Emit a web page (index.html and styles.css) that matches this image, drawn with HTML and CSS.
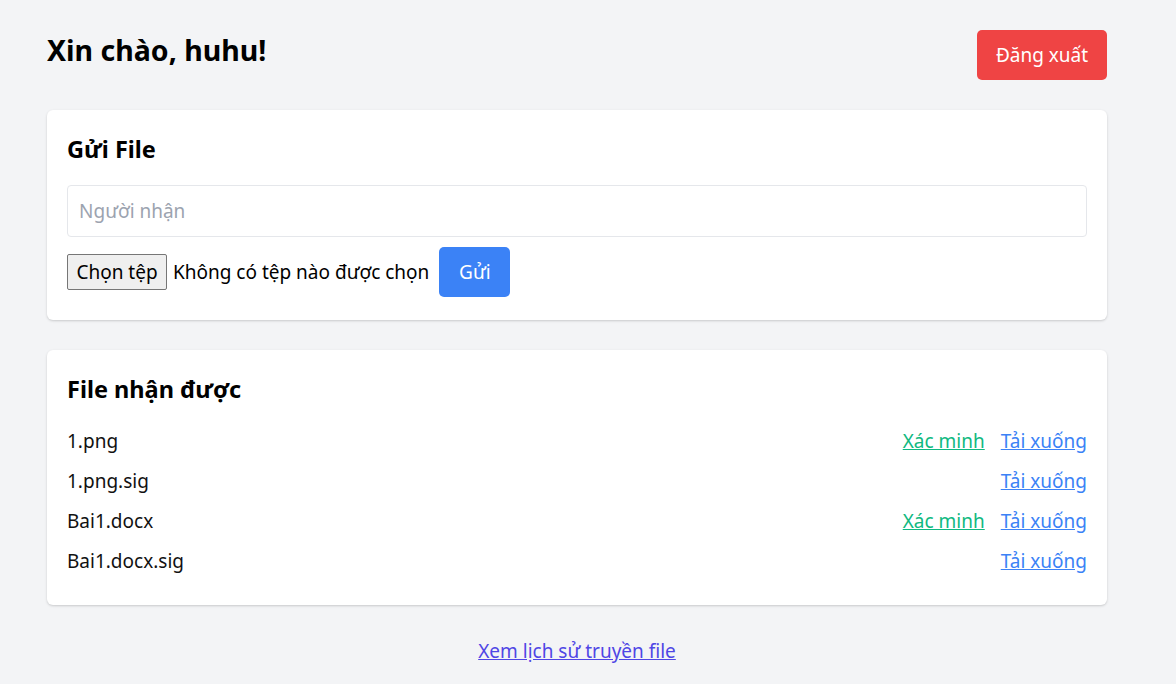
FILE: index.html
```html
<!DOCTYPE html>
<html lang="vi">
<head>
<meta charset="utf-8">
<title>Gửi File</title>
<link rel="stylesheet" href="styles.css">
</head>
<body>
<div class="page">
  <header class="header">
    <h1 class="greeting">Xin chào, huhu!</h1>
    <button class="btn btn-red" type="button">Đăng xuất</button>
  </header>

  <section class="card card-send">
    <h2 class="card-title">Gửi File</h2>
    <input class="text-input" type="text" placeholder="Người nhận">
    <div class="file-row">
      <span class="file-picker">
        <button class="file-btn" type="button">Chọn tệp</button>
        <span class="file-name">Không có tệp nào được chọn</span>
      </span>
      <button class="btn btn-blue" type="button">Gửi</button>
    </div>
  </section>

  <section class="card card-received">
    <h2 class="card-title">File nhận được</h2>
    <ul class="file-list">
      <li class="file-item"><span>1.png</span><span class="actions"><a href="#" class="link-green">Xác minh</a><a href="#" class="link-blue">Tải xuống</a></span></li>
      <li class="file-item"><span>1.png.sig</span><span class="actions"><a href="#" class="link-blue">Tải xuống</a></span></li>
      <li class="file-item"><span>Bai1.docx</span><span class="actions"><a href="#" class="link-green">Xác minh</a><a href="#" class="link-blue">Tải xuống</a></span></li>
      <li class="file-item"><span>Bai1.docx.sig</span><span class="actions"><a href="#" class="link-blue">Tải xuống</a></span></li>
    </ul>
  </section>

  <div class="history">
    <a href="#" class="link-indigo">Xem lịch sử truyền file</a>
  </div>
</div>
</body>
</html>
```

FILE: styles.css
```css
* { box-sizing: border-box; }
html, body {
  margin: 0;
  background: #f3f4f6;
}
body {
  font-family: "Noto Sans", "Open Sans", sans-serif;
  font-size: 19px;
  color: #111;
}
.page {
  width: 1060px;
  margin-left: 47px;
  padding-top: 30px;
}
.header {
  display: flex;
  justify-content: space-between;
  align-items: flex-start;
  margin-bottom: 30px;
}
.greeting {
  margin: 0;
  font-size: 28.5px;
  line-height: 40px;
  font-weight: 700;
  color: #000;
}
.btn {
  border: none;
  border-radius: 5px;
  color: #fff;
  font-family: inherit;
  font-size: 19px;
  height: 50px;
  padding: 0 20px;
  cursor: pointer;
}
.btn-red { background: #ef4444; width: 130px; padding: 0; }
.btn-blue { background: #3b82f6; width: 71px; padding: 0; }
.card {
  background: #fff;
  border-radius: 6px;
  box-shadow: 0 1px 3px rgba(0,0,0,0.12), 0 1px 2px rgba(0,0,0,0.06);
  padding: 20px 20px 23px;
}
.card-send { margin-bottom: 30px; }
.card-title {
  margin: 0 0 17px;
  font-size: 23.5px;
  line-height: 38px;
  font-weight: 700;
  color: #000;
}
.text-input {
  display: block;
  width: 100%;
  height: 52px;
  border: 1px solid #e5e7eb;
  border-radius: 4px;
  padding: 0 11px;
  font-family: inherit;
  font-size: 19px;
  color: #111;
  margin-bottom: 10px;
}
.text-input::placeholder { color: #9ca3af; }
.file-row {
  display: flex;
  align-items: center;
  gap: 10px;
}
.file-picker {
  display: flex;
  align-items: center;
  gap: 6px;
}
.file-btn {
  height: 36px;
  width: 100px;
  padding: 0;
  border: 1px solid #767676;
  border-radius: 2px;
  background: #efefef;
  font-family: inherit;
  font-size: 19px;
  color: #000;
}
.file-name { color: #000; }
.card-received { padding-bottom: 24px; }
.card-received .card-title { margin-bottom: 13px; }
.file-list {
  list-style: none;
  margin: 0;
  padding: 0;
}
.file-item {
  display: flex;
  justify-content: space-between;
  align-items: center;
  height: 40px;
}
.actions {
  display: flex;
  gap: 16px;
}
.link-green { color: #10b981; }
.link-blue { color: #3b82f6; }
.link-indigo { color: #4f46e5; }
.history {
  text-align: center;
  margin-top: 31px;
  line-height: 30px;
}
```
